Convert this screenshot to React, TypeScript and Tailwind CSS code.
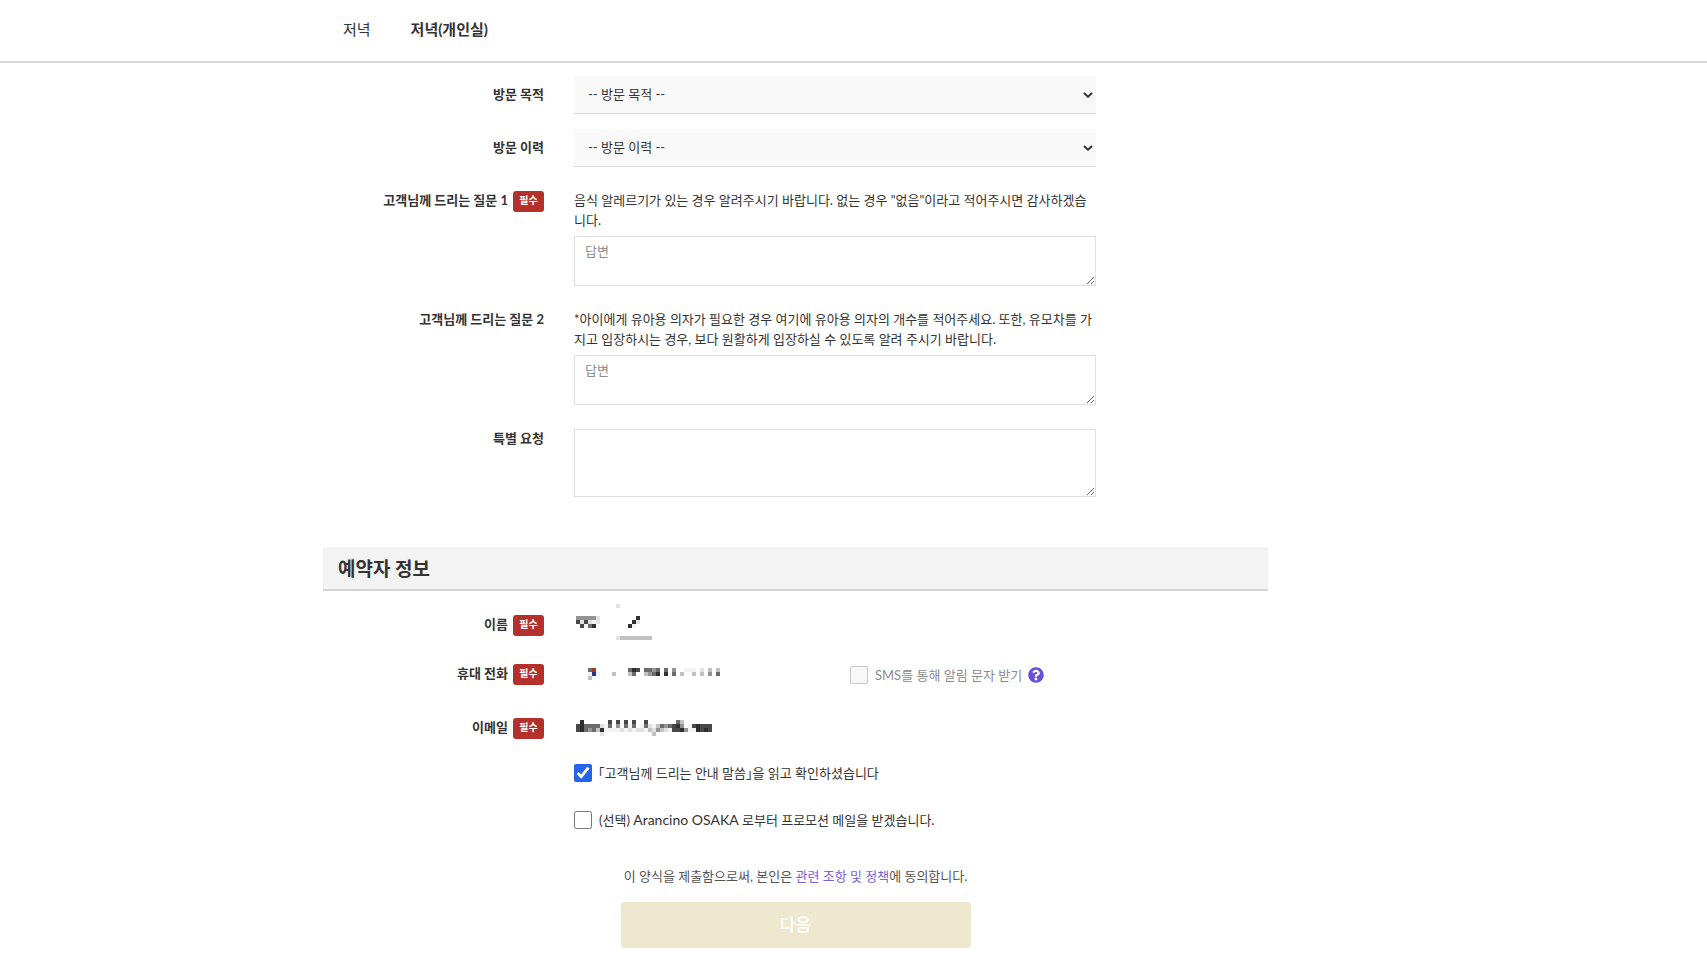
import type { ReactNode } from "react";
import { FaQuestionCircle } from "react-icons/fa";

const shades: Record<string, string> = {
  a: "#303030",
  b: "#484848",
  c: "#6c6c6c",
  d: "#949494",
  e: "#c2c2c2",
  f: "#e2e2e2",
  g: "#f3f3f3",
  r: "#a03824",
  u: "#26348c",
};

function Mosaic({ rows, label, cols }: { rows: string[]; label: string; cols: number }) {
  return (
    <svg role="img" aria-label={label} width={cols * 4} height={rows.length * 4} shapeRendering="crispEdges" className="block shrink-0">
      {rows.flatMap((row, y) =>
        row.split("").map((c, x) =>
          shades[c] ? <rect key={`${x}-${y}`} x={x * 4} y={y * 4} width={4} height={4} fill={shades[c]} /> : null,
        ),
      )}
    </svg>
  );
}

function Row({ label, id, required, children, className }: {
  label: string; id?: string; required?: boolean; children: ReactNode; className: string;
}) {
  return (
    <div className={`flex items-start gap-[30px] ${className}`}>
      <div className="flex w-[221px] shrink-0 items-start justify-end gap-[5px] leading-[18px] font-bold">
        {id ? <label htmlFor={id}>{label}</label> : <span>{label}</span>}
        {required && (
          <span className="flex h-[21px] w-[31px] items-center justify-center rounded-[3px] bg-[#b5302a] pb-[3px] text-[10px] leading-none text-white">
            필수
          </span>
        )}
      </div>
      {children}
    </div>
  );
}

function Select({ id, text }: { id: string; text: string }) {
  return (
    <div className="grid max-w-[522px] grow items-center">
      <select id={id} className="col-start-1 row-start-1 h-[38px] w-full appearance-none border-b border-[#d9d9d9] bg-[#f9f9f9] px-[14px] pb-px">
        <option>{text}</option>
      </select>
      <svg width="10" height="6" viewBox="0 0 10 6" aria-hidden="true" className="pointer-events-none col-start-1 row-start-1 mr-[3px] justify-self-end">
        <path d="M1 1l4 3.7L9 1" fill="none" stroke="#333" strokeWidth="2" />
      </svg>
    </div>
  );
}

function Question({ id, text }: { id: string; text: string }) {
  return (
    <div className="-mt-px max-w-[522px] grow">
      <p>{text}</p>
      <textarea
        id={id}
        placeholder="답변"
        className="mt-[6px] block h-[50px] w-full border border-[#e0e0e0] px-[10px] py-1 placeholder:text-[#8c8c8c]"
      />
    </div>
  );
}

export default function App() {
  return (
    <div className="min-h-screen bg-white font-['Lato','Noto_Sans_CJK_KR',sans-serif] text-[13px] leading-[20px] text-[#333]">
      <header className="flex h-[63px] gap-[40px] border-b-2 border-[#d8d8d8] pt-[19px] pl-[343px] text-[15px]">
        <a href="#dinner" className="h-5">저녁</a>
        <a href="#private" className="h-5 font-bold">저녁(개인실)</a>
      </header>

      <form className="ml-[323px] max-w-[945px] pt-[13px] pb-3">
        <Row label="방문 목적" id="purpose" className="mb-[15px] [&>div:first-child]:pt-[9px]">
          <Select id="purpose" text="-- 방문 목적 --" />
        </Row>
        <Row label="방문 이력" id="history" className="mb-[24px] [&>div:first-child]:pt-[9px]">
          <Select id="history" text="-- 방문 이력 --" />
        </Row>
        <Row label="고객님께 드리는 질문 1" id="q1" required className="mb-[24px]">
          <Question id="q1" text={'음식 알레르기가 있는 경우 알려주시기 바랍니다. 없는 경우 "없음"이라고 적어주시면 감사하겠습니다.'} />
        </Row>
        <Row label="고객님께 드리는 질문 2" id="q2" className="mb-[24px]">
          <Question
            id="q2"
            text="*아이에게 유아용 의자가 필요한 경우 여기에 유아용 의자의 개수를 적어주세요. 또한, 유모차를 가지고 입장하시는 경우, 보다 원활하게 입장하실 수 있도록 알려 주시기 바랍니다."
          />
        </Row>
        <Row label="특별 요청" id="request" className="mb-[50px]">
          <textarea id="request" className="block h-[68px] max-w-[522px] grow border border-[#e0e0e0] px-[10px] py-1" />
        </Row>

        <h2 className="mb-[24px] h-[44px] border-b-2 border-[#d4d4d4] bg-[#f3f3f3] px-[15px] text-[19px] leading-[44px] font-bold">
          예약자 정보
        </h2>

        <Row label="이름" required className="mb-[28px] h-[21px]">
          <div className="-mt-[11px] pl-[2px]">
            <Mosaic
              label="이름"
              cols={20}
              rows={[
                "..........f",
                "",
                "",
                "dddddf.........a",
                "bfbfgf........af",
                ".bgca........ag",
                "",
                "",
                "..........feeeeeeee",
              ]}
            />
          </div>
        </Row>
        <Row label="휴대 전화" required className="mb-[33px] h-[21px]">
          <div className="flex grow items-start">
            <div className="w-[276px] pt-1 pl-[14px]">
              <Mosaic
                label="휴대 전화"
                cols={34}
                rows={[
                  "cr........cab.ccdc.c.d..ggg.f.e.e",
                  "gug...e...ec..edca.a.c.e..e.e.d.c",
                  "e",
                ]}
              />
            </div>
            <div className="flex items-center pt-px text-[#8c8c8c]">
              <input id="sms" type="checkbox" disabled className="size-[18px] appearance-none rounded-[2px] border border-[#c8c8c8] bg-[#f8f8f8]" />
              <label htmlFor="sms" className="mr-[6px] ml-[7px]">SMS를 통해 알림 문자 받기</label>
              <button type="button" aria-label="도움말">
                <FaQuestionCircle className="block size-4 text-[#6a4fdc]" />
              </button>
            </div>
          </div>
        </Row>
        <Row label="이메일" required className="mb-[24px] h-[21px]">
          <div className="pt-[2px] pl-[2px]">
            <Mosaic
              label="이메일"
              cols={34}
              rows={[
                ".a......b.b.b.b..b.......ce",
                "baccccfgc.d.cgc.gcfgecdcbad.gbabbb",
                "bacdceaggggfgfgffgefdefgbbadggabab",
                "......f............e",
              ]}
            />
          </div>
        </Row>

        <div className="ml-[251px]">
          <div className="mb-[27px] flex items-center">
            <input id="notice" type="checkbox" defaultChecked className="size-[18px] accent-[#2563eb]" />
            <label htmlFor="notice" className="ml-[6px]">｢고객님께 드리는 안내 말씀｣을 읽고 확인하셨습니다</label>
          </div>
          <div className="mb-[36px] flex items-center">
            <input id="promo" type="checkbox" className="size-[18px]" />
            <label htmlFor="promo" className="ml-[7px]">
              (선택) <span className="text-[14px]">Arancino OSAKA</span> 로부터 프로모션 메일을 받겠습니다.
            </label>
          </div>
        </div>

        <div className="flex flex-col items-center">
          <p className="mb-[16px] text-[#555]">
            이 양식을 제출함으로써, 본인은 <a href="#policy" className="text-[#7a62e0]">관련 조항 및 정책</a>에 동의합니다.
          </p>
          <button type="submit" className="h-[46px] w-[350px] max-w-full rounded-[4px] bg-[#eee8cf] text-[17px] font-medium text-white">
            다음
          </button>
        </div>
      </form>
    </div>
  );
}
